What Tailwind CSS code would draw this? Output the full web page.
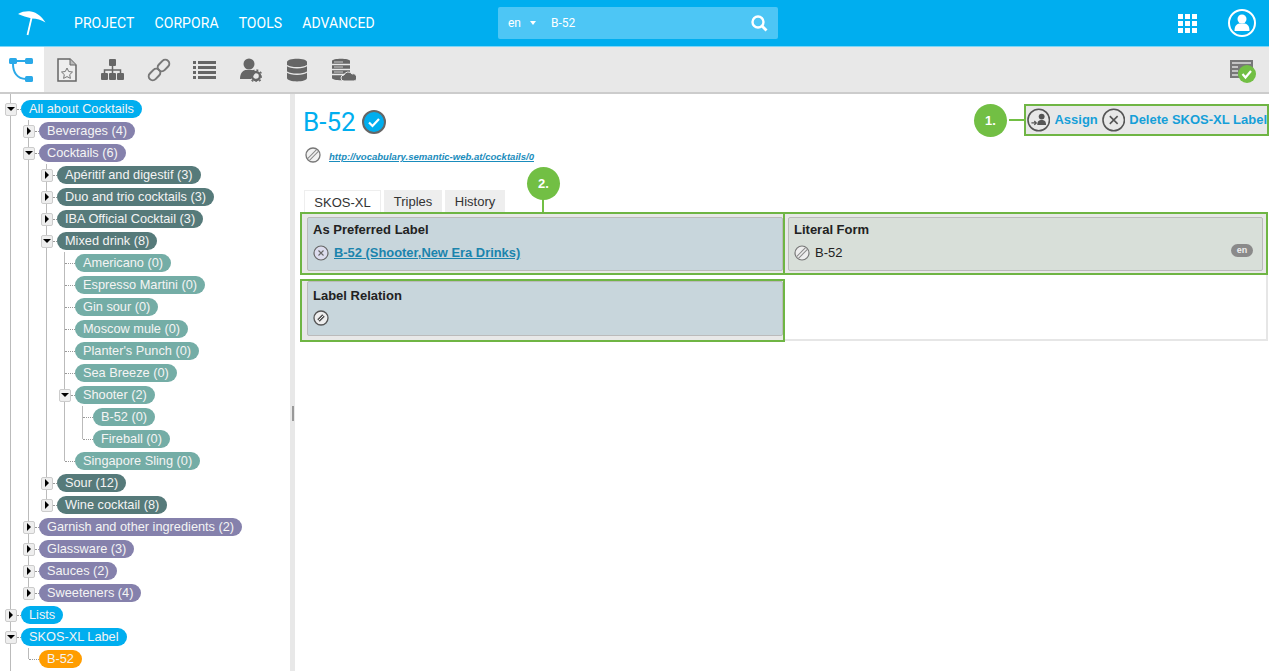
<!DOCTYPE html>
<html><head><meta charset="utf-8"><script src="https://cdn.jsdelivr.net/npm/@tailwindcss/browser@4"></script></head>
<body class="font-['Liberation_Sans',Arial,sans-serif]">
<div class="w-[1269px] h-[671px] overflow-hidden flex flex-col bg-white relative">
  <!-- header -->
  <header class="h-[46px] shrink-0 bg-[#00aeef] flex items-center text-white font-['Roboto',sans-serif] relative border-b border-[#7fd6f7] box-content">
    <div class="w-[74px] pl-[17px] shrink-0">
      <svg width="30" height="30" viewBox="0 0 30 30" class="block"><path d="M1 6C5 3.500 10 3 14 3.500C20 4.500 25 9 28.500 14.500C24 12 20 10.500 15 10.500C10 9 5 8 1 6Z" fill="#fff"/><path d="M14.500 10L10.500 27" stroke="#fff" stroke-width="1.800" fill="none"/></svg>
    </div>
    <nav class="flex gap-5 text-[14px] tracking-[0.07px] font-normal w-[424px] shrink-0"><span>PROJECT</span><span>CORPORA</span><span>TOOLS</span><span>ADVANCED</span></nav>
    <div class="w-[280px] h-[32px] bg-[#4dc6f5] rounded-[2px] flex items-center pl-[10px] pr-[10px] text-[12px] shrink-0">
      <span>en</span><span class="ml-[9px] w-0 h-0 border-x-[3px] border-x-transparent border-t-[4px] border-t-white"></span><span class="ml-[15px]">B-52</span>
      <svg class="ml-auto" width="18" height="18" viewBox="0 0 18 18"><circle cx="8" cy="8" r="5.500" fill="none" stroke="#fff" stroke-width="2.400"/><path d="M12 12l4.500 4.500" stroke="#fff" stroke-width="2.800"/></svg>
    </div>
    <div class="ml-auto flex items-center pr-[13px] gap-[31px]">
      <div class="grid grid-cols-3 gap-[2px]">
        <i class="block w-[5px] h-[5px] bg-white"></i><i class="block w-[5px] h-[5px] bg-white"></i><i class="block w-[5px] h-[5px] bg-white"></i><i class="block w-[5px] h-[5px] bg-white"></i><i class="block w-[5px] h-[5px] bg-white"></i><i class="block w-[5px] h-[5px] bg-white"></i><i class="block w-[5px] h-[5px] bg-white"></i><i class="block w-[5px] h-[5px] bg-white"></i><i class="block w-[5px] h-[5px] bg-white"></i>
      </div>
      <svg width="28" height="28" viewBox="0 0 28 28"><circle cx="14" cy="14" r="13" fill="none" stroke="#fff" stroke-width="2"/><circle cx="14" cy="10" r="4.500" fill="#fff"/><path d="M6.500 22c0-6 3-7 4.500-7.500h6c1.500 .5 4.500 1.500 4.500 7.500z" fill="#fff"/></svg>
    </div>
  </header>
  <!-- toolbar -->
  <div class="h-[47px] shrink-0 bg-[#e8e8e8] border-b-[2px] border-[#cccccc] flex items-stretch">
    <div class="w-[44px] bg-white flex items-center justify-center pr-[2px]">
      <svg width="26" height="26" viewBox="0 0 26 26"><rect x="1" y="1" width="8" height="6" rx="1.500" fill="#2aa9e8"/><rect x="17" y="1" width="8" height="6" rx="1.500" fill="#2aa9e8"/><rect x="17" y="19" width="8" height="6" rx="1.500" fill="#2aa9e8"/><path d="M8 4H18M5 7C5 15 9 22 18 22" fill="none" stroke="#2aa9e8" stroke-width="2"/></svg>
    </div>
    <div class="relative flex-1 flex items-center text-[#666]">
      <svg class="ml-[13px]" width="20" height="24" viewBox="0 0 20 24"><path d="M1 1H13L19 7V23H1Z" fill="#eee" stroke="#666" stroke-width="1.500"/><path d="M13 1V7H19" fill="#bbb" stroke="#666"/><path d="M10 10l1.700 3.500 3.800.5-2.800 2.600.7 3.800-3.400-1.800-3.400 1.800.7-3.800-2.800-2.600 3.800-.5z" fill="none" stroke="#777"/></svg>
      <svg class="ml-[24px]" width="23" height="21" viewBox="0 0 23 21"><rect x="8" y="0" width="7" height="7" rx="1" fill="#666"/><path d="M11.500 7V11M3.500 14V11H19.500V14M11.500 11V14" fill="none" stroke="#666" stroke-width="1.500"/><rect x="0" y="14" width="7" height="7" rx="1" fill="#666"/><rect x="8" y="14" width="7" height="7" rx="1" fill="#666"/><rect x="16" y="14" width="7" height="7" rx="1" fill="#666"/></svg>
      <svg class="ml-[23px]" width="24" height="24" viewBox="0 0 24 24"><g fill="none" stroke="#777" stroke-width="2"><rect x="-6.500" y="-4" width="13" height="8" rx="4" transform="translate(7.500 16.500) rotate(-45)"/><rect x="-6.500" y="-4" width="13" height="8" rx="4" transform="translate(16.500 7.500) rotate(-45)"/></g></svg>
      <svg class="ml-[22px]" width="23" height="20" viewBox="0 0 23 20"><g fill="#666"><rect x="0" y="1" width="3" height="3"/><rect x="5" y="1" width="18" height="3"/><rect x="0" y="6" width="3" height="3"/><rect x="5" y="6" width="18" height="3"/><rect x="0" y="11" width="3" height="3"/><rect x="5" y="11" width="18" height="3"/><rect x="0" y="16" width="3" height="3"/><rect x="5" y="16" width="18" height="3"/></g></svg>
      <svg class="ml-[24px]" width="22" height="24" viewBox="0 0 22 24"><circle cx="9" cy="6" r="5.500" fill="#666"/><path d="M0 21C0 14 4 12 6 12H12C14 12 15 13 16 14L11 21Z" fill="#666"/><circle cx="16" cy="18" r="4" fill="none" stroke="#666" stroke-width="2.400"/><circle cx="16" cy="18" r="6" fill="none" stroke="#666" stroke-width="1.400" stroke-dasharray="2 2"/></svg>
      <svg class="ml-[24px]" width="22" height="24" viewBox="0 0 22 24"><path d="M1 4C1 -0.500 21 -0.500 21 4V20C21 24.500 1 24.500 1 20Z" fill="#666"/><path d="M1 7.500C5 10.500 17 10.500 21 7.500M1 14C5 17 17 17 21 14" fill="none" stroke="#e8e8e8" stroke-width="1.500"/></svg>
      <svg class="ml-[23px]" width="25" height="24" viewBox="0 0 25 24"><path d="M1 3C1 0 19 0 19 3V20C19 23 1 23 1 20Z" fill="#666"/><path d="M1 6.500H19M1 11.500H19M1 16.500H19" stroke="#e8e8e8" stroke-width="1.300"/><path d="M3 4H12M3 9H12M3 14H12" stroke="#ccc" stroke-width="1"/><path d="M13 23a3 3 0 0 1 0-6 4.500 4.500 0 0 1 8-1 3.500 3.500 0 0 1 2 7z" fill="#666" stroke="#e8e8e8"/></svg>
      <svg class="absolute right-[13px] top-[13px]" width="26" height="24" viewBox="0 0 26 24"><rect x="0" y="0" width="23" height="18" fill="#777"/><path d="M2 3H21" stroke="#ddd" stroke-width="1.500"/><path d="M2 7H8M2 11H8M2 15H8" stroke="#ddd" stroke-width="1.500"/><circle cx="17" cy="14" r="9" fill="#72bf44"/><path d="M12.500 14l3 3.500 5.500-6.500" fill="none" stroke="#fff" stroke-width="2.200"/></svg>
    </div>
  </div>
  <!-- main -->
  <div class="flex-1 flex min-h-0">
    <aside class="w-[290px] shrink-0 overflow-hidden text-[12.75px] text-[#f4f4f4] leading-[18px] pt-[4px] pl-[5px] relative">
      <span class="absolute left-[10px] top-0 bottom-0 w-px bg-[#bbb]"></span>

      <div class="h-[22px] flex items-center relative"><span class="relative w-[12px] h-[13px] rounded-[2px] bg-[#eee] border border-[#ccc] flex items-center justify-center"><i class="w-0 h-0 border-x-[4px] border-x-transparent border-t-[4px] border-t-black"></i></span><i class="w-[4px] border-t border-dotted border-[#999]"></i><span class="bg-[#00aeef] rounded-full px-2 h-[18px] whitespace-nowrap">All about Cocktails</span></div>

      <div class="relative ml-[18px]"><span class="absolute left-[5px] top-0 bottom-[11px] w-px bg-[#bbb]"></span>
        <div class="h-[22px] flex items-center relative"><span class="relative w-[12px] h-[13px] rounded-[2px] bg-[#eee] border border-[#ccc] flex items-center justify-center"><i class="w-0 h-0 border-y-[4px] border-y-transparent border-l-[4px] border-l-black"></i></span><i class="w-[4px] border-t border-dotted border-[#999]"></i><span class="bg-[#8581ac] rounded-full px-2 h-[18px] whitespace-nowrap">Beverages (4)</span></div>
        <div class="h-[22px] flex items-center relative"><span class="relative w-[12px] h-[13px] rounded-[2px] bg-[#eee] border border-[#ccc] flex items-center justify-center"><i class="w-0 h-0 border-x-[4px] border-x-transparent border-t-[4px] border-t-black"></i></span><i class="w-[4px] border-t border-dotted border-[#999]"></i><span class="bg-[#8581ac] rounded-full px-2 h-[18px] whitespace-nowrap">Cocktails (6)</span></div>

        <div class="relative ml-[18px]"><span class="absolute left-[5px] top-0 bottom-[11px] w-px bg-[#bbb]"></span>
          <div class="h-[22px] flex items-center relative"><span class="relative w-[12px] h-[13px] rounded-[2px] bg-[#eee] border border-[#ccc] flex items-center justify-center"><i class="w-0 h-0 border-y-[4px] border-y-transparent border-l-[4px] border-l-black"></i></span><i class="w-[4px] border-t border-dotted border-[#999]"></i><span class="bg-[#567a7a] rounded-full px-2 h-[18px] whitespace-nowrap">Apéritif and digestif (3)</span></div>
          <div class="h-[22px] flex items-center relative"><span class="relative w-[12px] h-[13px] rounded-[2px] bg-[#eee] border border-[#ccc] flex items-center justify-center"><i class="w-0 h-0 border-y-[4px] border-y-transparent border-l-[4px] border-l-black"></i></span><i class="w-[4px] border-t border-dotted border-[#999]"></i><span class="bg-[#567a7a] rounded-full px-2 h-[18px] whitespace-nowrap">Duo and trio cocktails (3)</span></div>
          <div class="h-[22px] flex items-center relative"><span class="relative w-[12px] h-[13px] rounded-[2px] bg-[#eee] border border-[#ccc] flex items-center justify-center"><i class="w-0 h-0 border-y-[4px] border-y-transparent border-l-[4px] border-l-black"></i></span><i class="w-[4px] border-t border-dotted border-[#999]"></i><span class="bg-[#567a7a] rounded-full px-2 h-[18px] whitespace-nowrap">IBA Official Cocktail (3)</span></div>
          <div class="h-[22px] flex items-center relative"><span class="relative w-[12px] h-[13px] rounded-[2px] bg-[#eee] border border-[#ccc] flex items-center justify-center"><i class="w-0 h-0 border-x-[4px] border-x-transparent border-t-[4px] border-t-black"></i></span><i class="w-[4px] border-t border-dotted border-[#999]"></i><span class="bg-[#567a7a] rounded-full px-2 h-[18px] whitespace-nowrap">Mixed drink (8)</span></div>

          <div class="relative ml-[18px]"><span class="absolute left-[5px] top-0 bottom-[11px] w-px bg-[#bbb]"></span>
            <div class="h-[22px] flex items-center relative pl-[6px]"><i class="w-[10px] border-t border-dotted border-[#999]"></i><span class="bg-[#74ada6] rounded-full px-2 h-[18px] whitespace-nowrap">Americano (0)</span></div>
            <div class="h-[22px] flex items-center relative pl-[6px]"><i class="w-[10px] border-t border-dotted border-[#999]"></i><span class="bg-[#74ada6] rounded-full px-2 h-[18px] whitespace-nowrap">Espresso Martini (0)</span></div>
            <div class="h-[22px] flex items-center relative pl-[6px]"><i class="w-[10px] border-t border-dotted border-[#999]"></i><span class="bg-[#74ada6] rounded-full px-2 h-[18px] whitespace-nowrap">Gin sour (0)</span></div>
            <div class="h-[22px] flex items-center relative pl-[6px]"><i class="w-[10px] border-t border-dotted border-[#999]"></i><span class="bg-[#74ada6] rounded-full px-2 h-[18px] whitespace-nowrap">Moscow mule (0)</span></div>
            <div class="h-[22px] flex items-center relative pl-[6px]"><i class="w-[10px] border-t border-dotted border-[#999]"></i><span class="bg-[#74ada6] rounded-full px-2 h-[18px] whitespace-nowrap">Planter's Punch (0)</span></div>
            <div class="h-[22px] flex items-center relative pl-[6px]"><i class="w-[10px] border-t border-dotted border-[#999]"></i><span class="bg-[#74ada6] rounded-full px-2 h-[18px] whitespace-nowrap">Sea Breeze (0)</span></div>
            <div class="h-[22px] flex items-center relative"><span class="relative w-[12px] h-[13px] rounded-[2px] bg-[#eee] border border-[#ccc] flex items-center justify-center"><i class="w-0 h-0 border-x-[4px] border-x-transparent border-t-[4px] border-t-black"></i></span><i class="w-[4px] border-t border-dotted border-[#999]"></i><span class="bg-[#74ada6] rounded-full px-2 h-[18px] whitespace-nowrap">Shooter (2)</span></div>
            <div class="relative ml-[18px]"><span class="absolute left-[5px] top-0 bottom-[11px] w-px bg-[#bbb]"></span>
              <div class="h-[22px] flex items-center relative pl-[6px]"><i class="w-[10px] border-t border-dotted border-[#999]"></i><span class="bg-[#74ada6] rounded-full px-2 h-[18px] whitespace-nowrap">B-52 (0)</span></div>
              <div class="h-[22px] flex items-center relative pl-[6px]"><i class="w-[10px] border-t border-dotted border-[#999]"></i><span class="bg-[#74ada6] rounded-full px-2 h-[18px] whitespace-nowrap">Fireball (0)</span></div>
            </div>
            <div class="h-[22px] flex items-center relative pl-[6px]"><i class="w-[10px] border-t border-dotted border-[#999]"></i><span class="bg-[#74ada6] rounded-full px-2 h-[18px] whitespace-nowrap">Singapore Sling (0)</span></div>
          </div>

          <div class="h-[22px] flex items-center relative"><span class="relative w-[12px] h-[13px] rounded-[2px] bg-[#eee] border border-[#ccc] flex items-center justify-center"><i class="w-0 h-0 border-y-[4px] border-y-transparent border-l-[4px] border-l-black"></i></span><i class="w-[4px] border-t border-dotted border-[#999]"></i><span class="bg-[#567a7a] rounded-full px-2 h-[18px] whitespace-nowrap">Sour (12)</span></div>
          <div class="h-[22px] flex items-center relative"><span class="relative w-[12px] h-[13px] rounded-[2px] bg-[#eee] border border-[#ccc] flex items-center justify-center"><i class="w-0 h-0 border-y-[4px] border-y-transparent border-l-[4px] border-l-black"></i></span><i class="w-[4px] border-t border-dotted border-[#999]"></i><span class="bg-[#567a7a] rounded-full px-2 h-[18px] whitespace-nowrap">Wine cocktail (8)</span></div>
        </div>

        <div class="h-[22px] flex items-center relative"><span class="relative w-[12px] h-[13px] rounded-[2px] bg-[#eee] border border-[#ccc] flex items-center justify-center"><i class="w-0 h-0 border-y-[4px] border-y-transparent border-l-[4px] border-l-black"></i></span><i class="w-[4px] border-t border-dotted border-[#999]"></i><span class="bg-[#8581ac] rounded-full px-2 h-[18px] whitespace-nowrap">Garnish and other ingredients (2)</span></div>
        <div class="h-[22px] flex items-center relative"><span class="relative w-[12px] h-[13px] rounded-[2px] bg-[#eee] border border-[#ccc] flex items-center justify-center"><i class="w-0 h-0 border-y-[4px] border-y-transparent border-l-[4px] border-l-black"></i></span><i class="w-[4px] border-t border-dotted border-[#999]"></i><span class="bg-[#8581ac] rounded-full px-2 h-[18px] whitespace-nowrap">Glassware (3)</span></div>
        <div class="h-[22px] flex items-center relative"><span class="relative w-[12px] h-[13px] rounded-[2px] bg-[#eee] border border-[#ccc] flex items-center justify-center"><i class="w-0 h-0 border-y-[4px] border-y-transparent border-l-[4px] border-l-black"></i></span><i class="w-[4px] border-t border-dotted border-[#999]"></i><span class="bg-[#8581ac] rounded-full px-2 h-[18px] whitespace-nowrap">Sauces (2)</span></div>
        <div class="h-[22px] flex items-center relative"><span class="relative w-[12px] h-[13px] rounded-[2px] bg-[#eee] border border-[#ccc] flex items-center justify-center"><i class="w-0 h-0 border-y-[4px] border-y-transparent border-l-[4px] border-l-black"></i></span><i class="w-[4px] border-t border-dotted border-[#999]"></i><span class="bg-[#8581ac] rounded-full px-2 h-[18px] whitespace-nowrap">Sweeteners (4)</span></div>
      </div>

      <div class="h-[22px] flex items-center relative"><span class="relative w-[12px] h-[13px] rounded-[2px] bg-[#eee] border border-[#ccc] flex items-center justify-center"><i class="w-0 h-0 border-y-[4px] border-y-transparent border-l-[4px] border-l-black"></i></span><i class="w-[4px] border-t border-dotted border-[#999]"></i><span class="bg-[#00aeef] rounded-full px-2 h-[18px] whitespace-nowrap">Lists</span></div>
      <div class="h-[22px] flex items-center relative"><span class="relative w-[12px] h-[13px] rounded-[2px] bg-[#eee] border border-[#ccc] flex items-center justify-center"><i class="w-0 h-0 border-x-[4px] border-x-transparent border-t-[4px] border-t-black"></i></span><i class="w-[4px] border-t border-dotted border-[#999]"></i><span class="bg-[#00aeef] rounded-full px-2 h-[18px] whitespace-nowrap">SKOS-XL Label</span></div>
      <div class="relative ml-[18px]"><span class="absolute left-[5px] top-0 bottom-[11px] w-px bg-[#bbb]"></span>
        <div class="h-[22px] flex items-center relative pl-[6px]"><i class="w-[10px] border-t border-dotted border-[#999]"></i><span class="bg-[#ff9d00] rounded-full px-2 h-[18px] whitespace-nowrap">B-52</span></div>
      </div>
    </aside>
    <!-- splitter -->
    <div class="w-[5px] shrink-0 bg-[#e8e8e8] flex items-center justify-center pb-[3px]"><i class="block w-[2px] h-[15px] border-x border-[#999] mt-[64px]"></i></div>
    <!-- content -->
    <main class="flex-1 min-w-0 relative">
      <div class="h-[53px] flex items-start pl-[8px]">
        <h1 class="text-[26px] leading-[30px] mt-[13px] font-['Roboto',sans-serif] font-normal text-[#00aeef]">B-52</h1>
        <svg class="ml-[6px] mt-[16px]" width="24" height="24" viewBox="0 0 24 24"><circle cx="12" cy="12" r="11" fill="#00aeef" stroke="#666" stroke-width="2"/><path d="M7 12.500l3.500 3.500 6.500-7" fill="none" stroke="#fff" stroke-width="2.200"/></svg>
        <div class="ml-auto mt-[10px] h-[32px] w-[245px] shrink-0 bg-[#e8e8e8] border-2 border-[#6fb544] flex items-center pl-[1px] gap-[4px] text-[13px] font-bold text-[#169fd8] whitespace-nowrap relative">
          <span class="absolute left-[-17px] top-[13px] w-[17px] h-[2px] bg-[#72bf44]"></span>
          <span class="absolute left-[-52px] top-[-2px] w-[33px] h-[33px] rounded-full bg-[#72bf44] flex items-center justify-center text-white text-[13px] font-bold">1.</span>
          <svg width="24" height="24" viewBox="0 0 24 24"><circle cx="12" cy="12" r="11" fill="none" stroke="#555" stroke-width="1.600"/><circle cx="15" cy="8.500" r="3" fill="#555"/><path d="M10.500 17c0-4 2-5 4.500-5s4.500 1 4.500 5z" fill="#555"/><path d="M4.500 15h5M7.500 13l2 2-2 2" fill="none" stroke="#555" stroke-width="1.300"/></svg>
          <span>Assign</span>
          <svg width="24" height="24" viewBox="0 0 24 24"><circle cx="12" cy="12" r="11" fill="none" stroke="#555" stroke-width="1.600"/><path d="M8 8l8 8M16 8l-8 8" stroke="#555" stroke-width="1.600"/></svg>
          <span>Delete SKOS-XL Label</span>
        </div>
      </div>
      <div class="flex items-center pl-[10px] h-[16px] mb-[27px]">
        <svg width="16" height="16" viewBox="0 0 16 16"><circle cx="8" cy="8" r="7" fill="#f2f2f2" stroke="#777" stroke-width="1.300"/><path d="M3.800 12.200l8.400-8.400" stroke="#888" stroke-width="3.600"/><path d="M3.800 12.200l8.400-8.400" stroke="#f2f2f2" stroke-width="1.600"/></svg>
        <a class="ml-[8px] mt-[5px] text-[9.550px] italic font-bold text-[#1a8cbc] underline">http://vocabulary.semantic-web.at/cocktails/0</a>
      </div>
      <div class="flex pl-[9px] gap-[3px] h-[22px] text-[13px] leading-[24px] text-[#333] relative">
        <span class="w-[77px] bg-white text-center border-x border-t border-[#eee]">SKOS-XL</span>
        <span class="w-[58px] bg-[#eeeeee] text-center">Triples</span>
        <span class="w-[60px] bg-[#eeeeee] text-center">History</span>
        <span class="absolute left-[232px] top-[-23px] w-[33px] h-[33px] rounded-full bg-[#72bf44] flex items-center justify-center text-white text-[13px] leading-[18px] font-bold">2.</span>
        <span class="absolute left-[247px] top-[9px] w-[2px] h-[13px] bg-[#72bf44]"></span>
      </div>
      <div class="ml-[5px] w-[968px] h-[129px] border-b-2 border-r-2 border-[#e6e6e6] grid grid-cols-[485px_483px] grid-rows-[63px_63px] gap-y-[4px] text-[13px] text-[#222]">
        <div class="border-2 border-[#6fb544] pt-[3px] pb-[2px] pl-[5px] bg-[#e8e8e8]">
          <div class="h-full bg-[#c8d6dc] border border-[#bbb] rounded-[2px] px-[5px] pt-[3px]">
            <div class="font-bold leading-[18px]">As Preferred Label</div>
            <div class="flex items-center mt-[4px] gap-[5px]">
              <svg width="16" height="16" viewBox="0 0 16 16"><circle cx="8" cy="8" r="7" fill="#dde" stroke="#666" stroke-width="1.200"/><path d="M5.500 5.500l5 5M10.500 5.500l-5 5" stroke="#666" stroke-width="1.100"/></svg>
              <a class="font-bold text-[12.900px] text-[#1b84ad] underline">B-52 (Shooter,New Era Drinks)</a>
            </div>
          </div>
        </div>
        <div class="border-2 border-l-0 border-[#6fb544] pt-[3px] pb-[2px] px-[3px] bg-[#e8e8e8]">
          <div class="h-full bg-[#d8dfd9] border border-[#bbb] rounded-[2px] px-[5px] pt-[3px] relative">
            <div class="font-bold leading-[18px]">Literal Form</div>
            <div class="flex items-center mt-[4px] gap-[5px]">
              <svg width="16" height="16" viewBox="0 0 16 16"><circle cx="8" cy="8" r="7" fill="#eee" stroke="#777" stroke-width="1.200"/><path d="M3.800 12.200l8.400-8.400" stroke="#888" stroke-width="3.600"/><path d="M3.800 12.200l8.400-8.400" stroke="#eee" stroke-width="1.600"/></svg>
              <span>B-52</span>
            </div>
            <span class="absolute right-[9px] top-[26px] w-[22px] h-[13px] rounded-full bg-[#8a8a8a] text-[#eee] text-[9px] font-bold leading-[13px] text-center">en</span>
          </div>
        </div>
        <div class="border-2 border-[#6fb544] pb-[4px] pl-[5px] bg-[#e8e8e8]">
          <div class="h-full bg-[#c8d6dc] border border-[#bbb] rounded-[2px] px-[5px] pt-[5px]">
            <div class="font-bold leading-[18px]">Label Relation</div>
            <div class="mt-[5px]">
              <svg width="16" height="16" viewBox="0 0 16 16"><circle cx="8" cy="8" r="7" fill="#eee" stroke="#555" stroke-width="1.300"/><path d="M5.500 10.500l5-5" stroke="#555" stroke-width="3.500"/><path d="M5.500 10.500l5-5" stroke="#eee" stroke-width="1"/></svg>
            </div>
          </div>
        </div>
      </div>
    </main>
  </div>
</div>
</body></html>
